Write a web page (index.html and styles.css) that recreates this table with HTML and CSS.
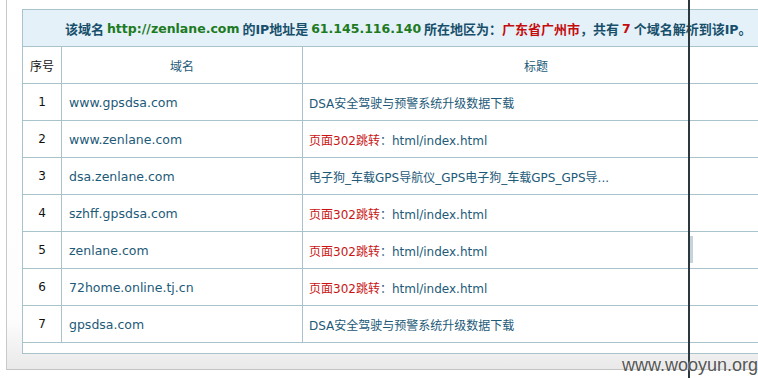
FILE: index.html
```html
<!DOCTYPE html>
<html lang="zh-CN">
<head>
<meta charset="utf-8">
<title>IP反查</title>
<link rel="stylesheet" href="styles.css">
</head>
<body>
<div class="panel">
  <div class="result">
    <div class="caption">
      <span class="lbl">该域名</span>&nbsp;<span class="grn lat">http://zenlane.com</span>&nbsp;<span class="lbl">的<span class="lat">IP</span>地址是</span>&nbsp;<span class="grn lat">61.145.116.140</span>&nbsp;<span class="lbl">所在地区为：</span><span class="red">广东省广州市</span><span class="lbl">，共有</span>&nbsp;<span class="red lat">7</span>&nbsp;<span class="lbl">个域名解析到该<span class="lat">IP</span>。</span>
    </div>
    <div class="row head">
      <div class="cell num">序号</div>
      <div class="cell mid link">域名</div>
      <div class="cell mid link">标题</div>
    </div>
    <div class="row"><div class="cell num">1</div><div class="cell link dom">www.gpsdsa.com</div><div class="cell link tit">DSA安全驾驶与预警系统升级数据下载</div></div>
    <div class="row"><div class="cell num">2</div><div class="cell link dom">www.zenlane.com</div><div class="cell link tit"><span class="red2">页面302跳转</span>：html/index.html</div></div>
    <div class="row"><div class="cell num">3</div><div class="cell link dom">dsa.zenlane.com</div><div class="cell link tit">电子狗_车载GPS导航仪_GPS电子狗_车载GPS_GPS导...</div></div>
    <div class="row"><div class="cell num">4</div><div class="cell link dom">szhff.gpsdsa.com</div><div class="cell link tit"><span class="red2">页面302跳转</span>：html/index.html</div></div>
    <div class="row"><div class="cell num">5</div><div class="cell link dom">zenlane.com</div><div class="cell link tit"><span class="red2">页面302跳转</span>：html/index.html</div></div>
    <div class="row"><div class="cell num">6</div><div class="cell link dom">72home.online.tj.cn</div><div class="cell link tit"><span class="red2">页面302跳转</span>：html/index.html</div></div>
    <div class="row"><div class="cell num">7</div><div class="cell link dom">gpsdsa.com</div><div class="cell link tit">DSA安全驾驶与预警系统升级数据下载</div></div>
    <div class="foot"></div>
  </div>
</div>
<div class="seam"></div>
<div class="thumb"></div>
<div class="watermark">www.wooyun.org</div>
</body>
</html>
```
FILE: styles.css
```css
html, body {
  margin: 0;
  padding: 0;
  width: 758px;
  height: 378px;
  overflow: hidden;
  background: #ffffff;
}
body {
  position: relative;
  font-family: "DejaVu Sans", "Noto Sans CJK SC", sans-serif;
  font-size: 12px;
}
.panel {
  margin-left: 6px;
  width: 800px;
  padding: 9px 0 15px 15px;
  border-left: 1px solid #c9c9c9;
  border-bottom: 1px solid #c4c4c4;
  background: linear-gradient(to bottom, #ffffff 0, #fdfdfd 320px, #e9e9e9 100%);
}
.result {
  width: 746px;
  border: 1px solid #a8c3cc;
  background: #ffffff;
}
.caption {
  height: 37px;
  box-sizing: border-box;
  border-bottom: 1px solid #a8c3cc;
  background: #e4f1f9;
  display: flex;
  align-items: center;
  padding-left: 42px;
  white-space: nowrap;
  font-family: "Noto Sans CJK SC", sans-serif;
  font-size: 13px;
  font-weight: bold;
}
.caption .lat {
  font-family: "DejaVu Sans", sans-serif;
  font-size: 12.5px;
}
.lbl { color: #174f6b; }
.grn { color: #1d7a1f; }
.red { color: #c40c0c; }
.red2 { color: #c91414; }
.row {
  display: grid;
  grid-template-columns: 39px 241px 1fr;
  height: 37px;
  box-sizing: border-box;
  border-bottom: 1px solid #a8c3cc;
}
.cell {
  display: flex;
  align-items: center;
  white-space: nowrap;
  overflow: hidden;
}
.cell.num {
  justify-content: center;
  color: #111111;
  border-right: 1px solid #a8c3cc;
}
.cell.mid { justify-content: center; }
.link { color: #1d5a78; }
.dom {
  padding-left: 7px;
  font-size: 12.5px;
  border-right: 1px solid #a8c3cc;
}
.head .cell:nth-child(2) { border-right: 1px solid #a8c3cc; }
.tit { padding-left: 6px; }
.foot { height: 10px; }
.seam {
  position: absolute;
  left: 688px;
  top: 0;
  width: 2px;
  height: 378px;
  background: #2b383d;
}
.thumb {
  position: absolute;
  left: 690px;
  top: 236px;
  width: 3px;
  height: 27px;
  background: #c6d3db;
}
.watermark {
  position: absolute;
  right: 0;
  top: 354px;
  font-family: "Liberation Sans", Arial, sans-serif;
  font-size: 18px;
  line-height: 22px;
  color: #555555;
  text-shadow: 0 0 2px #ffffff;
}
```
